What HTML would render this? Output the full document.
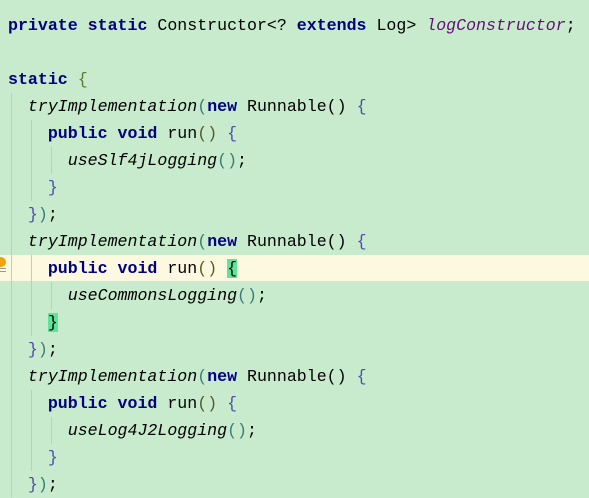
<!DOCTYPE html>
<html><head><meta charset="utf-8"><style>
html,body{margin:0;padding:0}
body{width:589px;height:496px;background:#c7ebcc;position:relative;overflow:hidden;font-family:"Liberation Mono",monospace;font-size:16.6px;color:#000}
.l{position:absolute;left:8px;height:27px;line-height:27px;white-space:pre}
.k{color:#000080;font-weight:bold}
.i{font-style:italic}
.f{font-style:italic;color:#660e7a}
.g{position:absolute;width:1px;background:#b0d4c2}
.p1{color:#3a7d7a}.p2{color:#5a5a2a}.b1{color:#5a7a30}.b2{color:#4b4bb0}
.m{background:#5ee39a}
</style></head><body>
<div style="position:absolute;left:0;top:255px;width:589px;height:26px;background:#fdf8e0"></div>
<div style="position:absolute;left:-4px;top:257px;width:10px;height:10px;border-radius:50%;background:#f0a30a"></div>
<div style="position:absolute;left:0;top:268px;width:6px;height:1px;background:#999"></div>
<div style="position:absolute;left:0;top:271px;width:6px;height:1px;background:#999"></div>
<div class="g" style="left:11px;top:93px;height:404px"></div>
<div class="g" style="left:31px;top:120px;height:81px"></div>
<div class="g" style="left:51px;top:147px;height:27px"></div>
<div class="g" style="left:31px;top:255px;height:81px"></div>
<div class="g" style="left:51px;top:282px;height:27px"></div>
<div class="g" style="left:31px;top:390px;height:81px"></div>
<div class="g" style="left:51px;top:417px;height:27px"></div>

<div class="l" style="top:12px"><span class="k">private static</span> Constructor&lt;? <span class="k">extends</span> Log&gt; <span class="f">logConstructor</span>;</div>
<div class="l" style="top:66px"><span class="k">static</span> <span class="b1">{</span></div>
<div class="l" style="top:93px">  <span class="i">tryImplementation</span><span class="p1">(</span><span class="k">new</span> Runnable() <span class="b2">{</span></div>
<div class="l" style="top:120px">    <span class="k">public void</span> run<span class="p2">()</span> <span class="b2">{</span></div>
<div class="l" style="top:147px">      <span class="i">useSlf4jLogging</span><span class="p1">()</span>;</div>
<div class="l" style="top:174px">    <span class="b2">}</span></div>
<div class="l" style="top:201px">  <span class="b2">}</span><span class="p1">)</span>;</div>
<div class="l" style="top:228px">  <span class="i">tryImplementation</span><span class="p1">(</span><span class="k">new</span> Runnable() <span class="b2">{</span></div>
<div class="l" style="top:255px">    <span class="k">public void</span> run<span class="p2">()</span> <span class="m">{</span></div>
<div class="l" style="top:282px">      <span class="i">useCommonsLogging</span><span class="p1">()</span>;</div>
<div class="l" style="top:309px">    <span class="m">}</span></div>
<div class="l" style="top:336px">  <span class="b2">}</span><span class="p1">)</span>;</div>
<div class="l" style="top:363px">  <span class="i">tryImplementation</span><span class="p1">(</span><span class="k">new</span> Runnable() <span class="b2">{</span></div>
<div class="l" style="top:390px">    <span class="k">public void</span> run<span class="p2">()</span> <span class="b2">{</span></div>
<div class="l" style="top:417px">      <span class="i">useLog4J2Logging</span><span class="p1">()</span>;</div>
<div class="l" style="top:444px">    <span class="b2">}</span></div>
<div class="l" style="top:471px">  <span class="b2">}</span><span class="p1">)</span>;</div>
</body></html>
